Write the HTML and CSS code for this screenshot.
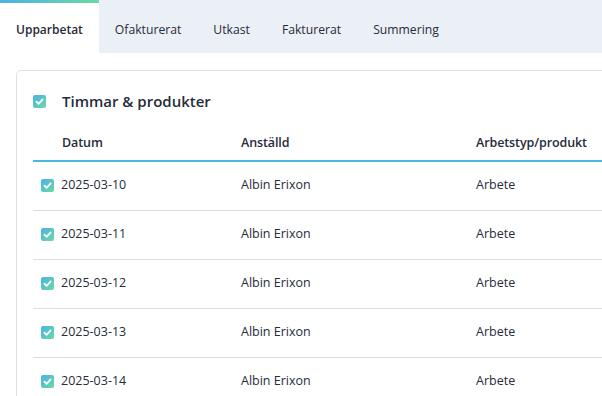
FILE: index.html
```html
<!DOCTYPE html>
<html lang="sv">
<head>
  <meta charset="UTF-8" />
  <meta name="viewport" content="width=device-width, initial-scale=1.0" />
  <title>Upparbetat</title>
  <link rel="stylesheet" href="styles.css">
</head>
<body>

  <svg width="0" height="0" class="defs">
    <defs>
      <linearGradient id="check-grad" x1="0" y1="0" x2="1" y2="1">
        <stop offset="0" stop-color="#4cb1e6" />
        <stop offset="1" stop-color="#6cdaa2" />
      </linearGradient>
      <symbol id="check" viewBox="0 0 13 13">
        <rect width="13" height="13" rx="2" fill="url(#check-grad)" />
        <path d="M3.4 6.7 L5.6 8.8 L9.7 4.4" fill="none" stroke="#fff" stroke-width="1.7" stroke-linecap="round" stroke-linejoin="round" />
      </symbol>
    </defs>
  </svg>

  <nav class="tabs">
    <a class="tab active" href="#">Upparbetat</a>
    <a class="tab" href="#">Ofakturerat</a>
    <a class="tab" href="#">Utkast</a>
    <a class="tab" href="#">Fakturerat</a>
    <a class="tab" href="#">Summering</a>
  </nav>

  <section class="content">
    <div class="card">
      <div class="card-title">
        <svg class="checkbox"><use href="#check" /></svg>
        <h2>Timmar &amp; produkter</h2>
      </div>

      <div class="table">
        <div class="row head">
          <div class="cell first">Datum</div>
          <div class="cell">Anställd</div>
          <div class="cell">Arbetstyp/produkt</div>
        </div>
        <div class="row">
          <div class="cell first"><svg class="checkbox"><use href="#check" /></svg>2025-03-10</div>
          <div class="cell">Albin Erixon</div>
          <div class="cell">Arbete</div>
        </div>
        <div class="row">
          <div class="cell first"><svg class="checkbox"><use href="#check" /></svg>2025-03-11</div>
          <div class="cell">Albin Erixon</div>
          <div class="cell">Arbete</div>
        </div>
        <div class="row">
          <div class="cell first"><svg class="checkbox"><use href="#check" /></svg>2025-03-12</div>
          <div class="cell">Albin Erixon</div>
          <div class="cell">Arbete</div>
        </div>
        <div class="row">
          <div class="cell first"><svg class="checkbox"><use href="#check" /></svg>2025-03-13</div>
          <div class="cell">Albin Erixon</div>
          <div class="cell">Arbete</div>
        </div>
        <div class="row">
          <div class="cell first"><svg class="checkbox"><use href="#check" /></svg>2025-03-14</div>
          <div class="cell">Albin Erixon</div>
          <div class="cell">Arbete</div>
        </div>
      </div>
    </div>
  </section>

</body>
</html>
```

FILE: styles.css
```css
html, body {
  margin: 0;
  overflow: hidden;
}
body {
  font-family: 'Open Sans', 'Noto Sans', sans-serif;
  font-size: 12.5px;
  color: #272c3a;
  background-color: #fff;
  width: 1000px;
}
.defs {
  position: absolute;
}

.tabs {
  display: flex;
  background-color: #ebeff6;
  height: 53px;
}
.tab {
  display: flex;
  align-items: center;
  padding: 5px 16px 0;
  text-decoration: none;
  color: #272c3a;
  font-size: 12.2px;
}
.tab.active {
  background-color: #fff;
  font-weight: 600;
  font-size: 12px;
  border-top: 3px solid transparent;
  border-image: linear-gradient(90deg, #4cb1e6, #6cdaa2) 1;
  border-width: 3px 0 0 0;
  padding-top: 2px;
}

.content {
  padding: 17px 0 0 16px;
}
.card {
  border: 1px solid #dfe0e8;
  border-radius: 5px;
  padding: 22px 0 0 16px;
  height: 400px;
}
.card-title {
  display: flex;
  align-items: center;
  gap: 16px;
  height: 16px;
  margin-bottom: 17px;
}
.card-title h2 {
  margin: 0;
  font-size: 15px;
  font-weight: 600;
  line-height: 16px;
}
.checkbox {
  width: 13px;
  height: 13px;
  flex: none;
}

.row {
  display: grid;
  grid-template-columns: 208px 235px 1fr;
  border-bottom: 1px solid #dcdde5;
}
.row.head {
  border-bottom: 2px solid #4db6de;
  font-weight: 600;
  font-size: 12.5px;
  letter-spacing: -0.1px;
}
.cell {
  display: flex;
  align-items: center;
  line-height: 18px;
  padding: 14px 0 16px;
}
.head .cell {
  padding: 8px 0;
}
.cell.first {
  gap: 7px;
  padding-left: 8px;
}
.head .cell.first {
  padding-left: 29px;
}
```
